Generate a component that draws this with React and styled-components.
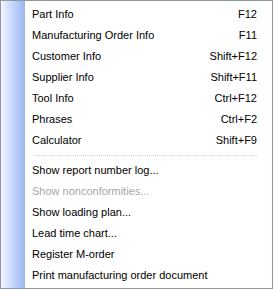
import styled, { createGlobalStyle } from 'styled-components'

const Global = createGlobalStyle`
  html, body {
    margin: 0;
    padding: 0;
    background: #ffffff;
  }
`

const Menu = styled.div`
  box-sizing: border-box;
  width: 273px;
  height: 289px;
  border: 1px solid #8d9aa2;
  background: #ffffff;
  display: flex;
  font-family: "Liberation Sans", Arial, sans-serif;
  font-size: 11px;
  color: #000;
`

const Strip = styled.div`
  width: 24px;
  flex: none;
  background: linear-gradient(to right, #f2f5fe 0%, #c9d8fb 45%, #9cb6f4 100%);
`

const List = styled.div`
  flex: 1;
  padding: 2.5px 0 0 0;
  display: flex;
  flex-direction: column;
`

const Item = styled.div`
  height: 21px;
  display: flex;
  align-items: center;
  justify-content: space-between;
  padding: 0 15px 0 7px;
  color: ${p => (p.$disabled ? '#a7a7a7' : '#000')};
  white-space: nowrap;
`

const Separator = styled.div`
  height: 9px;
  display: flex;
  align-items: center;
  padding: 0 14px 0 9px;
  &::after {
    content: '';
    flex: 1;
    border-top: 1px dotted #c6d2c6;
  }
`

const top = [
  ['Part Info', 'F12'],
  ['Manufacturing Order Info', 'F11'],
  ['Customer Info', 'Shift+F12'],
  ['Supplier Info', 'Shift+F11'],
  ['Tool Info', 'Ctrl+F12'],
  ['Phrases', 'Ctrl+F2'],
  ['Calculator', 'Shift+F9'],
]

const bottom = [
  ['Show report number log...'],
  ['Show nonconformities...', null, true],
  ['Show loading plan...'],
  ['Lead time chart...'],
  ['Register M-order'],
  ['Print manufacturing order document'],
]

export default function App() {
  return (
    <>
      <Global />
      <Menu>
        <Strip />
        <List>
          {top.map(([label, key]) => (
            <Item key={label}>
              <span>{label}</span>
              <span>{key}</span>
            </Item>
          ))}
          <Separator />
          {bottom.map(([label, key, disabled]) => (
            <Item key={label} $disabled={disabled}>
              <span>{label}</span>
              {key && <span>{key}</span>}
            </Item>
          ))}
        </List>
      </Menu>
    </>
  )
}
